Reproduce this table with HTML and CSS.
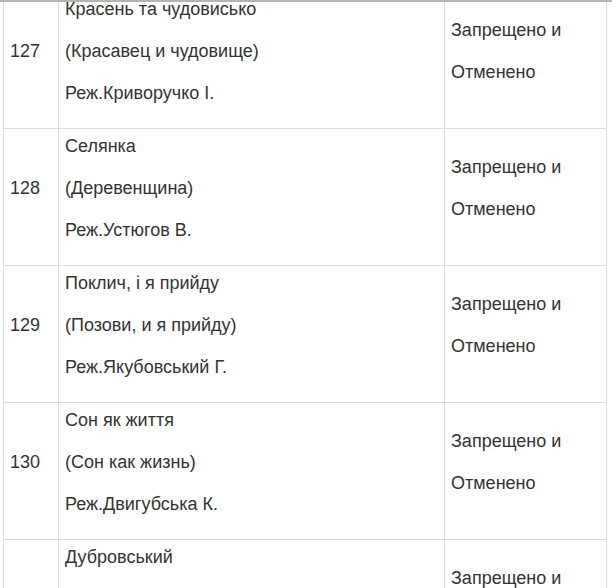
FILE: index.html
```html
<!DOCTYPE html>
<html lang="uk">
<head>
<meta charset="utf-8">
<link rel="stylesheet" href="styles.css">
</head>
<body>
<div class="topline"></div>
<table class="films">
  <colgroup><col class="c-num"><col class="c-title"><col class="c-status"></colgroup>
  <tbody>
    <tr>
      <td><p>127</p></td>
      <td><p>Красень та чудовисько</p><p>(Красавец и чудовище)</p><p>Реж.Криворучко І.</p></td>
      <td><p>Запрещено и</p><p>Отменено</p></td>
    </tr>
    <tr>
      <td><p>128</p></td>
      <td><p>Селянка</p><p>(Деревенщина)</p><p>Реж.Устюгов В.</p></td>
      <td><p>Запрещено и</p><p>Отменено</p></td>
    </tr>
    <tr>
      <td><p>129</p></td>
      <td><p>Поклич, і я прийду</p><p>(Позови, и я прийду)</p><p>Реж.Якубовський Г.</p></td>
      <td><p>Запрещено и</p><p>Отменено</p></td>
    </tr>
    <tr>
      <td><p>130</p></td>
      <td><p>Сон як життя</p><p>(Сон как жизнь)</p><p>Реж.Двигубська К.</p></td>
      <td><p>Запрещено и</p><p>Отменено</p></td>
    </tr>
    <tr>
      <td><p>131</p></td>
      <td><p>Дубровський</p><p>(Дубровский)</p><p>Реж.Пушкін О.</p></td>
      <td><p>Запрещено и</p><p>Отменено</p></td>
    </tr>
  </tbody>
</table>
</body>
</html>
```
FILE: styles.css
```css
html, body {
  margin: 0;
  padding: 0;
  background: #fff;
}
body {
  font-family: "Liberation Sans", Arial, sans-serif;
  font-size: 18px;
  color: #333;
  overflow: hidden;
}
.topline {
  position: fixed;
  top: 0;
  left: 0;
  right: 0;
  height: 2px;
  background: #b4b4b4;
  z-index: 2;
}
.films {
  border-collapse: collapse;
  margin: -9px 0 0 3px;
  width: 603px;
  table-layout: fixed;
}
.c-num { width: 55px; }
.c-title { width: 386px; }
.c-status { width: 162px; }
.films td {
  border: 1px solid #dcdcdc;
  padding: 5px 6px 5px;
  vertical-align: middle;
}
.films p {
  margin: 0 0 17px;
  line-height: 25px;
}
```
